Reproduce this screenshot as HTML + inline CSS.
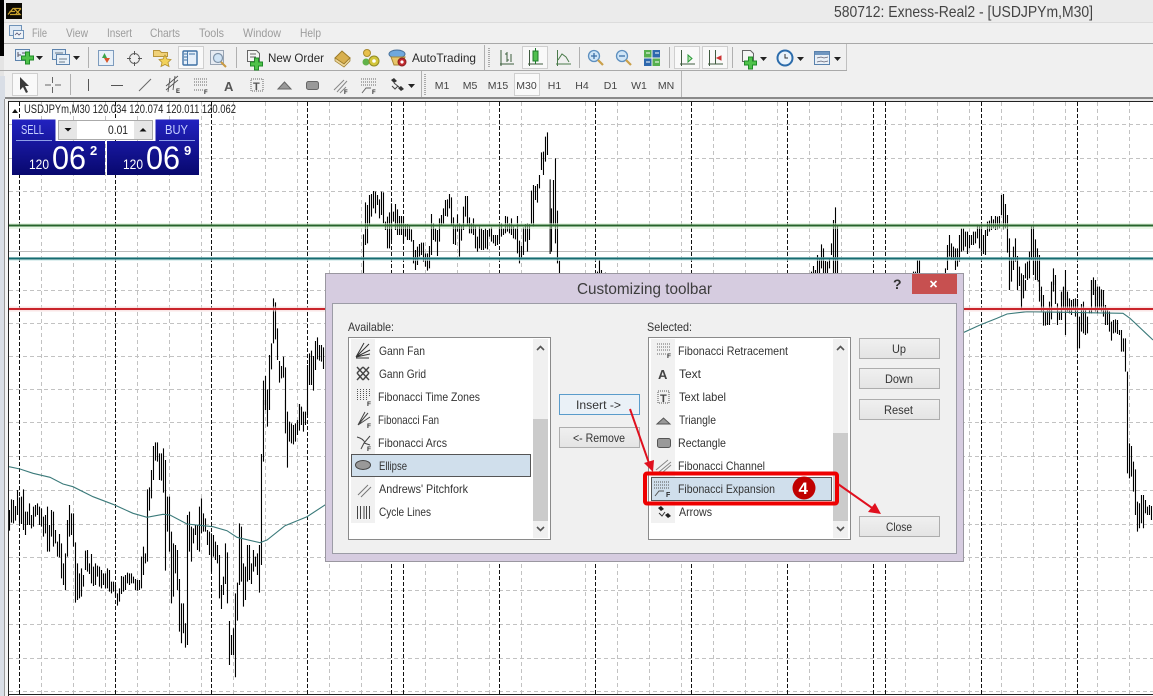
<!DOCTYPE html>
<html><head><meta charset="utf-8"><title>Customizing toolbar</title>
<style>
html,body{margin:0;padding:0;background:#fff;width:1153px;height:696px;overflow:hidden}
svg{display:block}
text{font-family:"Liberation Sans",sans-serif;font-size:11.5px;fill:#2a2a2a}
.m{fill:#9c9c9c;font-size:12px}
.tf{font-size:10.5px;fill:#444;text-anchor:middle}
.l{font-size:12px;fill:#333}
.w{fill:#fff}
</style></head><body>
<svg width="1153" height="696" viewBox="0 0 1153 696" xmlns="http://www.w3.org/2000/svg">
<defs>
<linearGradient id="g2" x1="0" y1="0" x2="0" y2="1"><stop offset="0" stop-color="#2222c0"/><stop offset="1" stop-color="#08086e"/></linearGradient>
<linearGradient id="b" x1="0" y1="0" x2="0" y2="1"><stop offset="0" stop-color="#f0f0f0"/><stop offset="1" stop-color="#e4e4e4"/></linearGradient>
</defs>

<!-- window chrome -->
<rect width="1153" height="696" fill="#fff"/>
<rect width="1153" height="98" fill="#f0f0f0"/>
<rect width="1153" height="22" fill="#ebebeb"/>
<rect y="22" width="1153" height="1" fill="#dcdcdc"/>
<rect y="43" width="1153" height="1" fill="#a8a8a8"/>
<rect y="97" width="1153" height="2" fill="#8a8a8a"/>
<rect y="99" width="1153" height="2" fill="#e8e8e8"/>
<rect x="0" y="0" width="4" height="56" fill="#000"/>
<rect x="0" y="56" width="4" height="20" fill="#e4e4e4"/>
<rect x="0" y="76" width="5" height="620" fill="#d9dee6"/>
<rect x="4" y="99" width="1" height="597" fill="#9a9a9a"/>
<rect x="5" y="99" width="3" height="597" fill="#f4f4f4"/>
<!-- logo -->
<rect x="6" y="3" width="16" height="16" fill="#0c0a04"/>
<path d="M8 14.500L13 8.500H21M9.500 11.500H15M10 14.500H20L14 8.500M16 14L21 8.500" fill="none" stroke="#c9a22e" stroke-width="1.300"/>
<text x="834" y="17" style="font-size:16px;fill:#444" textLength="259" lengthAdjust="spacingAndGlyphs">580712: Exness-Real2 - [USDJPYm,M30]</text>

<!-- menu -->
<rect x="9.500" y="25.500" width="12" height="10" fill="#dfe9f4" stroke="#6f92b8"/>
<rect x="13.500" y="30.500" width="10" height="8" fill="#eef3f8" stroke="#6f92b8"/>
<path d="M15 35l2-2 2 2 2-2" fill="none" stroke="#557" stroke-width=".8"/>
<text class="m" x="32" y="37" textLength="15" lengthAdjust="spacingAndGlyphs">File</text>
<text class="m" x="66" y="37" textLength="22" lengthAdjust="spacingAndGlyphs">View</text>
<text class="m" x="107" y="37" textLength="25" lengthAdjust="spacingAndGlyphs">Insert</text>
<text class="m" x="150" y="37" textLength="30" lengthAdjust="spacingAndGlyphs">Charts</text>
<text class="m" x="199" y="37" textLength="25" lengthAdjust="spacingAndGlyphs">Tools</text>
<text class="m" x="243" y="37" textLength="38" lengthAdjust="spacingAndGlyphs">Window</text>
<text class="m" x="300" y="37" textLength="21" lengthAdjust="spacingAndGlyphs">Help</text>

<!-- toolbar frames -->
<path d="M846.500 44V70" fill="none" stroke="#c0c0c0"/>
<rect y="70" width="847" height="1" fill="#a9a9a9"/>
<rect x="681" y="71" width="1" height="26" fill="#b5b5b5"/>
<path d="M88.500 47v21M236.500 47v21M484.500 45v25M579.500 47v21M669.500 47v21M732.500 47v21M70.500 74v21M421.500 71v26" stroke="#b0b0b0" fill="none"/>
<path d="M489 48v20M425 74v21" stroke="#aaa" stroke-width="2" stroke-dasharray="1 1" fill="none"/>
<!-- pressed boxes -->
<g fill="#f9f9f9" stroke="#cfcfcf">
<rect x="178.500" y="46.500" width="25" height="22"/><rect x="522.500" y="46.500" width="25" height="22"/>
<rect x="674.500" y="46.500" width="25" height="22"/><rect x="702.500" y="46.500" width="25" height="22"/>
<rect x="12.500" y="73.500" width="25" height="22"/><rect x="514.500" y="73.500" width="25" height="22"/>
</g>

<!-- row 1 icons -->
<rect x="15.500" y="49.500" width="14" height="11" fill="#e2ecf7" stroke="#5d83ad"/>
<path d="M18 52v5M18 55h3M22 53h4" stroke="#556" fill="none"/>
<path d="M25.500 52h4v4h4v4h-4v4h-4v-4h-4v-4h4z" fill="#4fc24a" stroke="#1f8a28"/>
<path d="M36 56h7l-3.500 4z" fill="#222"/>
<rect x="52.500" y="49.500" width="13" height="10" fill="#dbe7f3" stroke="#5d83ad"/>
<rect x="56.500" y="54.500" width="13" height="10" fill="#e8f0f8" stroke="#5d83ad"/>
<path d="M55 53h8M59 59h8M59 62h6" stroke="#456" fill="none" stroke-width=".8"/>
<path d="M73 56h7l-3.500 4z" fill="#222"/>
<rect x="98.500" y="50.500" width="15" height="15" fill="#e8f0f8" stroke="#7d9bbd"/>
<path d="M102 58l2.500-5 2.500 5z" fill="#3aa44a"/><path d="M104 58l3 5 3-5z" fill="#d8562a"/>
<circle cx="134.500" cy="58.500" r="5" fill="none" stroke="#666"/>
<path d="M134.500 51v4M134.500 62v4M127 58.500h4M138 58.500h4" stroke="#555" fill="none"/>
<path d="M153.500 50.500h6l2 2h6v4h-14z" fill="#f0d178" stroke="#b9953a"/>
<path d="M165 55l2 4 4 .5-3 3 1 4-4-2-4 2 1-4-3-3 4-.5z" fill="#f2d25a" stroke="#b18f2e" stroke-width=".8"/>
<rect x="183" y="51" width="14" height="14" rx="1" fill="#e6eff9" stroke="#3e70a4" stroke-width="1.400"/>
<path d="M187.500 51v14M184 54h3M184 57h3M184 60h3M189 54h6" stroke="#3e70a4" fill="none" stroke-width=".9"/>
<rect x="210.500" y="50.500" width="13" height="14" fill="#e6ebf2" stroke="#97a3b2"/>
<circle cx="218" cy="58" r="4.500" fill="#cfe3f5" stroke="#7f93a8" stroke-width="1.200"/>
<path d="M221 62l5 5" stroke="#c99a43" stroke-width="2"/>
<path d="M247.500 50.500h9l3 3v8h-12z" fill="#f5f5f5" stroke="#666"/>
<path d="M250 54h6M250 57h6" stroke="#666" fill="none"/>
<path d="M254.500 58h4v4h4v4h-4v4h-4v-4h-4v-4h4z" fill="#4fc24a" stroke="#1f8a28"/>
<text x="268" y="62" style="font-size:12px" textLength="56" lengthAdjust="spacingAndGlyphs">New Order</text>
<path d="M335 58l7-7 8 7-6 6z" fill="#d8b050" stroke="#9b7a26"/><path d="M335 58v3l9 6 6-6v-3l-6 6z" fill="#ecd69a" stroke="#9b7a26" stroke-width=".7"/>
<circle cx="367" cy="53" r="3.500" fill="#e8c04c" stroke="#a88a2e"/><circle cx="366" cy="62" r="3.500" fill="#61b24a"/>
<circle cx="374" cy="61" r="5" fill="#d2c53a" stroke="#8f8a26"/><circle cx="374" cy="61" r="1.800" fill="#fff"/>
<ellipse cx="397" cy="54" rx="8" ry="4" fill="#6fa8dc" stroke="#47709a"/>
<path d="M391 57l3 8h8l3-8z" fill="#e8c668" stroke="#a58734"/>
<circle cx="402" cy="62" r="4" fill="#c0272d" stroke="#822"/><circle cx="402" cy="62" r="1.600" fill="#fff"/>
<text x="412" y="62" style="font-size:12px" textLength="64" lengthAdjust="spacingAndGlyphs">AutoTrading</text>

<!-- chart type -->
<g fill="none" stroke="#3f5a3f">
<path d="M501 50v16M500 64h14M507 52v10M505 54h2M507 60h2M511 54v8" stroke="#3b5e3b"/>
<path d="M529.500 50v16M528 64h15"/>
<rect x="533" y="51" width="5" height="10" fill="#4fbf4f" stroke="#1e7a2a"/><path d="M535.500 48v3M535.500 61v3" stroke="#1e7a2a"/>
<path d="M557.500 50v16M556 64h15M558 60l4-6 4 3 3 5" stroke="#4a7a4a"/>
<path d="M681.500 50v16M680 64h15"/><path d="M688 55v7l4-3.500z" fill="#b8e8b0" stroke="#2a9a3a"/>
<path d="M709.500 50v16M708 64h15M715.500 50v14"/><path d="M717 58l4-2v4z" fill="#c33" stroke="#c33"/>
</g>
<g fill="none">
<circle cx="594" cy="56" r="5.500" fill="#cfe5f7" stroke="#5d8fbf" stroke-width="1.300"/><path d="M591 56h6M594 53v6" stroke="#3a6ea5" stroke-width="1.300"/><path d="M598 60l5 5" stroke="#caa04a" stroke-width="2.200"/>
<circle cx="622" cy="56" r="5.500" fill="#cfe5f7" stroke="#5d8fbf" stroke-width="1.300"/><path d="M619 56h6" stroke="#3a6ea5" stroke-width="1.300"/><path d="M626 60l5 5" stroke="#caa04a" stroke-width="2.200"/>
</g>
<rect x="644" y="50" width="7.500" height="7.500" fill="#57b04f"/><rect x="652.500" y="50" width="7.500" height="7.500" fill="#2e68ad"/>
<rect x="644" y="58.500" width="7.500" height="7.500" fill="#2e68ad"/><rect x="652.500" y="58.500" width="7.500" height="7.500" fill="#57b04f"/>
<path d="M646 53h4M655 53h4M646 62h4M655 62h4" stroke="#fff"/>
<path d="M742.500 50.500h8l3 3v8h-11z" fill="#f5f5f5" stroke="#666"/>
<path d="M748.500 57h4v4h4v4h-4v4h-4v-4h-4v-4h4z" fill="#4fc24a" stroke="#1f8a28"/>
<path d="M760 57h7l-3.500 4z" fill="#222"/>
<circle cx="785" cy="58" r="7.500" fill="#eaf3fb" stroke="#2c6cab" stroke-width="2"/><path d="M785 54v4h3" stroke="#333" fill="none"/>
<path d="M797 57h7l-3.500 4z" fill="#222"/>
<rect x="814.500" y="51.500" width="15" height="13" fill="#e9f0f7" stroke="#5a82ad"/><rect x="815" y="52" width="14" height="3" fill="#6f96c0"/>
<path d="M817 58l4-1 3 1 4-1M817 62l4-1 3 1 4-1" stroke="#667" stroke-width=".8" fill="none"/>
<path d="M834 57h7l-3.500 4z" fill="#222"/>

<!-- row 2 icons -->
<path d="M20 77v13l3-3 3 6 2-1-3-6h4z" fill="#3a3a3a"/>
<path d="M52.500 77v6M52.500 87v6M45 85h6M55 85h6" stroke="#666" fill="none"/>
<path d="M88.500 79v12" stroke="#555"/><path d="M111 85.500h12" stroke="#555"/><path d="M139 91l12-12" stroke="#666"/>
<g fill="none" stroke="#555" stroke-width=".9">
<path d="M166 90l12-10M166 86l12-10M168 92l2-14M173 90l2-14"/>
</g>
<text x="176" y="93" style="font-size:6px;font-weight:bold">E</text>
<path d="M194 79h13M194 82h13M194 85h13M194 90h9" stroke="#666" stroke-dasharray="1 1" fill="none"/>
<text x="204" y="94" style="font-size:6px;font-weight:bold">F</text>
<text x="224" y="91" style="font-size:13px;fill:#555;font-weight:bold">A</text>
<rect x="251" y="79" width="12" height="12" fill="none" stroke="#666" stroke-dasharray="1 1"/>
<text x="253" y="90" style="font-size:11px;font-weight:bold;fill:#555">T</text>
<path d="M278 89l6.500-7 6.500 7z" fill="#999" stroke="#666"/>
<rect x="306.500" y="81.500" width="12" height="8" rx="2" fill="#999" stroke="#666"/>
<path d="M334 90l10-10M337 92l10-11M340 93l6-6" stroke="#888" fill="none"/>
<text x="344" y="94" style="font-size:6px;font-weight:bold">F</text>
<path d="M361 79h15M361 82h15M361 85h15" stroke="#666" stroke-dasharray="1 1" fill="none"/><path d="M362 93l4-5 5 0" stroke="#666" fill="none"/>
<text x="372" y="94" style="font-size:6px;font-weight:bold">F</text>
<path d="M391 80l3-2 3 3-3 2zM398 88l3-2 3 3-3 2z" fill="#333"/><path d="M394 83l5 4M392 86l3 3 3-3" stroke="#444" fill="none"/>
<path d="M408 84h7l-3.500 4z" fill="#222"/>

<!-- timeframes -->
<text class="tf" x="442" y="89">M1</text><text class="tf" x="470" y="89">M5</text>
<text class="tf" x="498" y="89">M15</text><text class="tf" x="526.500" y="89">M30</text>
<text class="tf" x="554.500" y="89">H1</text><text class="tf" x="582" y="89">H4</text>
<text class="tf" x="610.500" y="89">D1</text><text class="tf" x="639" y="89">W1</text>
<text class="tf" x="666" y="89">MN</text>

<!-- chart frame -->
<path d="M8.500 696V101.500H1153" fill="none" stroke="#222"/>
<rect x="9" y="694" width="1144" height="1" fill="#222"/>

<!-- grid -->
<path fill="none" stroke="#c2c2c2" stroke-dasharray="4 3" d="M41.500 102V694M73.500 102V694M105.500 102V694M137.500 102V694M169.500 102V694M201.500 102V694M233.500 102V694M265.500 102V694M297.500 102V694M329.500 102V694M361.500 102V694M425.500 102V694M457.500 102V694M489.500 102V694M521.500 102V694M585.500 102V694M617.500 102V694M649.500 102V694M681.500 102V694M713.500 102V694M745.500 102V694M777.500 102V694M809.500 102V694M841.500 102V694M905.500 102V694M937.500 102V694M969.500 102V694M1001.500 102V694M1033.500 102V694M1065.500 102V694M1097.500 102V694M1129.500 102V694"/>
<path fill="none" stroke="#c2c2c2" stroke-dasharray="4 3" d="M9 124.500H1153M9 158.500H1153M9 191.500H1153M9 225.500H1153M9 258.500H1153M9 290.500H1153M9 323.500H1153M9 356.500H1153M9 389.500H1153M9 422.500H1153M9 456.500H1153M9 490.500H1153M9 524.500H1153M9 557.500H1153M9 590.500H1153M9 624.500H1153M9 658.500H1153M9 691.500H1153"/>
<path fill="none" stroke="#111" stroke-dasharray="4 2" d="M19.500 102V694M115.500 102V694M211.500 102V694M307.500 102V694M391.500 102V694M403.500 102V694M499.500 102V694M595.500 102V694M691.500 102V694M787.500 102V694M873.500 102V694M885.500 102V694M981.500 102V694M1077.500 102V694"/>
<rect x="9" y="251" width="1144" height="1" fill="#bcbcbc"/>

<!-- bars -->
<g fill="none" stroke="#000" stroke-width="3.300">
<path transform="translate(.17 400) scale(.3333 .3333)" d="M28 330V392M34 298V368M40 300V370M46 318V362M52 270V345M58 292V370M64 290V372M70 268V390M76 335V405M82 335V375M88 310V375M94 345V385M100 320V380M106 315V350M112 310V345M118 320V375M124 325V380M130 350V410M136 345V400M142 320V455M148 375V455M154 330V410M160 335V440M166 390V430M172 425V470M178 402V472M184 430V535M190 490V555M196 460V570M202 360V470M208 315V410M214 340V405M220 340V440M226 427V608M232 490V600M238 520V595M244 505V590M250 525V560M256 452V510M262 450V515M268 490V522M274 462V550M280 500V558M286 490V555M292 497V530M298 500V560M304 510V565M310 520V555M316 520V565M322 505V565M328 510V575M334 545V580M340 545V575M346 555V590M352 580V617M358 565V605M364 528V582M370 530V575M376 525V570M382 518V550M388 520V555M394 520V550M400 530V550M406 537V570M412 540V572M418 540V570M424 470V565M430 440V525M436 460V490M442 268V485M448 262V332M454 210V295M460 138V240M466 127V182M472 127V185M478 160V240M484 160V242M490 145V278M496 180V512M502 290V395M508 290V455M514 395V610M520 430V590M526 435V520M532 450V570M538 537V695M544 610V730M550 610V700M556 670V743M562 345V735M568 335V455M574 380V485M580 385V430M586 375V405M592 375V450M598 320V455M604 295V400M610 340V395M616 355V395M622 390V435M628 395V465M634 400V515M640 405V470M646 425V480M652 435V490M658 465V595M664 555V627M670 530V585M676 430V552M682 457V610M688 663V795M694 705V765M700 685V765M706 580V832M712 548V662M718 370V555M724 380V545M730 490V620M736 500V600M742 435V545M748 435V540M754 490V552M760 450V515M766 470V500M772 460V525M778 435V578M784 162V495M790 0V185M796 0V15M802 0V80M856 0V100M862 35V203M868 65V125M874 70V130M880 75V133M886 70V125M892 60V105M898 12V92M904 20V75M910 35V95M916 35V75M922 0V45"/>
<path transform="translate(250.170 290) scale(.3333 .3333)" d="M40 272V360M46 258V360M52 298V360M58 195V360M64 160V238M70 25V160M76 37V148M82 115V210M88 213V278M94 228V265M100 200V263M106 232V360M148 342V360M154 352V360M172 225V360M178 190V285M184 182V285M190 198V302M196 153V240M202 142V208M208 165V212M214 165V215M220 172V237"/>
<path transform="translate(340.170 120) scale(.3333 .3333)" d="M70 343V460M76 247V375M82 255V370M88 225V315M94 222V290M100 213V265M106 215V280M112 225V255M118 238V295M124 215V285M130 217V310M136 305V330M142 290V385M148 277V385M154 250V360M160 275V305M166 252V330M172 268V345M178 288V345M184 288V345M190 290V370M196 312V350M202 312V360M208 318V360M214 328V365M220 360V430M226 390V450M232 380V435M238 372V410M244 368V405M250 368V425M256 400V440M262 400V452M268 378V445M274 282V405M280 310V360M286 325V365M292 330V408M298 295V365M304 285V318M310 265V312M316 240V288M322 238V290M328 222V265M334 232V315M340 292V372M346 315V375M352 283V335M358 310V410M364 315V362M370 260V330M376 228V290M382 228V315M388 292V340M394 310V340M400 295V345M406 320V385M412 350V395M418 320V385M424 325V390M430 330V390M436 325V385M442 330V388M448 325V350M454 322V365M460 345V370M466 345V378M472 345V375M478 320V360M484 310V350M490 325V345M496 288V340M502 290V335M508 310V340M514 295V345M520 320V355M526 325V358M532 288V400M538 362V430M544 378V415M550 322V405M556 312V365M562 310V395M568 312V360M574 212V312M580 195V320M586 198V240M592 192V248M598 165V205M604 97V150M610 95V165M616 50V125M622 37V105M630 178V402M634 265V395M640 180V320M646 115V370M652 272V430M658 422V460M772 455V460M778 420V460M784 450V460M796 458V460"/>
<path transform="translate(800.170 180) scale(.3333 .3333)" d="M34 275V280M40 258V280M46 270V280M52 225V280M58 235V280M64 193V265M70 205V280M76 243V280M82 245V280M88 235V265M94 190V225M100 120V280M106 82V280M112 135V280M340 275V280M346 275V280M352 240V280M358 240V280M436 265V280M442 195V270M448 165V230M454 190V240M460 200V240M466 205V270M472 205V260M478 165V245M484 145V215M490 145V212M496 155V200M502 155V222M508 165V205M514 165V195M520 155V195M526 155V190M532 133V175M538 140V205M544 135V215M550 165V222M556 150V225M562 125V168M568 122V155M574 108V150M580 118V145M586 108V150M592 110V148M598 108V145M604 45V105M610 42V148M616 72V145M622 105V218M628 175V330M634 235V300M640 200V270M646 175V245M652 228V330M658 260V300M664 280V360M670 285V335M676 250V295M682 245V300M688 215V295M694 140V240M700 140V285M706 178V300M712 205V300M718 225V320M724 320V360M754 330V360M760 265V335M766 285V315M784 340V360M790 322V360M796 270V360M802 335V360M820 357V360M826 357V360M832 357V360M874 300V360M880 292V345M886 325V360M892 320V360M898 320V355M904 328V360M910 333V360"/>
<path transform="translate(960.170 280) scale(.3333 .3333)" d="M148 0V30M154 0V5M178 0V18M184 0V85M190 0V55M196 0V32M234 0V5M238 0V65M244 45V95M250 45V137M256 95V137M262 90V135M268 65V135M274 5V118M280 0V15M286 0V72M292 70V135M298 95V120M304 35V120M310 20V90M316 0V165M322 55V95M328 55V100M334 60V105M340 58V90M346 55V110M352 58V205M358 110V205M364 72V155M370 65V160M376 90V165M382 110V160M388 90V100M394 0V100M400 0V45M406 0V95M412 55V100M418 20V90M424 30V95M430 30V110M436 75V135M442 90V135M448 95V155M454 125V182M460 120V160M466 118V158M472 120V162M478 150V165M484 150V215M490 175V215M496 175V275M502 275V580M508 490V595M514 498V590M520 545V635M526 568V705M532 665V755M538 670V745M544 645V730M550 645V745M556 660V700M562 680V705M568 675V705M574 678V720"/>
</g>

<!-- moving average -->
<path fill="none" stroke="#3b7a7a" stroke-width="1.100" d="M9 466.700L20 469L33 473.300L50 477.300L63 484L73 486.700L93 496.700L113 504.300L133 513.300L147 517.300L163 514.300L170 515L187 524L213 526.700L227 530.700L237 537.300L260 542.700L267 540L285 525.700L307 516.700L326 504.300L400 440L700 340L964 332.300L980 325L997 318.300L1007 314L1027 311.700L1123 313.300L1130 318.300L1153 340"/>

<!-- horizontal lines -->
<rect x="9" y="223" width="1144" height="6" fill="#d9f0d3" opacity=".55"/>
<rect x="9" y="224.500" width="1144" height="2" fill="#27642b"/>
<rect x="9" y="257" width="1144" height="4" fill="#c9e6e6" opacity=".6"/>
<rect x="9" y="257.500" width="1144" height="2" fill="#166b70"/>
<rect x="9" y="306.500" width="1144" height="5" fill="#f6d5d5" opacity=".6"/>
<rect x="9" y="308" width="1144" height="2" fill="#c9242b"/>

<!-- chart header + trade panel -->
<path d="M12 113l3-4 3 4z" fill="#111"/>
<text x="24" y="113" style="font-size:11.5px;fill:#222" textLength="212" lengthAdjust="spacingAndGlyphs">USDJPYm,M30  120.034 120.074 120.011 120.062</text>
<path d="M12 119.500H55.500V141H105V175H12z" fill="url(#g2)"/>
<path d="M107 141H155.500V119.500H199V175H107z" fill="url(#g2)"/>
<rect x="16" y="140" width="36" height="1" fill="#8fa0e8"/><rect x="159" y="140" width="36" height="1" fill="#8fa0e8"/>
<text x="21" y="134" style="font-size:12.500px;fill:#c6d0ff" textLength="23" lengthAdjust="spacingAndGlyphs">SELL</text>
<text x="165" y="134" style="font-size:12.500px;fill:#c6d0ff" textLength="23" lengthAdjust="spacingAndGlyphs">BUY</text>
<rect x="58.500" y="120.500" width="94" height="19" fill="#fff" stroke="#aaa"/>
<rect x="59" y="121" width="18" height="18" fill="#e6e6e6"/><rect x="134" y="121" width="18" height="18" fill="#e6e6e6"/>
<path d="M64.500 128h7l-3.500 3.500z" fill="#111"/><path d="M139.500 131.500h7l-3.500-3.500z" fill="#111"/>
<text x="108" y="134" style="font-size:12px;fill:#222" textLength="20" lengthAdjust="spacingAndGlyphs">0.01</text>
<text class="w" x="29" y="169" style="font-size:14px" textLength="20" lengthAdjust="spacingAndGlyphs">120</text>
<text class="w" x="52" y="169" style="font-size:32px" textLength="34" lengthAdjust="spacingAndGlyphs">06</text>
<text class="w" x="90" y="155" style="font-size:13px;font-weight:bold">2</text>
<text class="w" x="123" y="169" style="font-size:14px" textLength="20" lengthAdjust="spacingAndGlyphs">120</text>
<text class="w" x="146" y="169" style="font-size:32px" textLength="34" lengthAdjust="spacingAndGlyphs">06</text>
<text class="w" x="184" y="155" style="font-size:13px;font-weight:bold">9</text>

<!-- dialog -->
<rect x="325.500" y="273.500" width="638" height="288" fill="#d6cce0" stroke="#9a97a0"/>
<rect x="332.500" y="303.500" width="624" height="250" fill="#f0f0f0" stroke="#9c9ca6"/>
<text x="577" y="294" style="font-size:16px;fill:#3c3c3c" textLength="135" lengthAdjust="spacingAndGlyphs">Customizing toolbar</text>
<text x="893" y="289" style="font-size:14px;font-weight:bold;fill:#333">?</text>
<rect x="912" y="274" width="45" height="20" fill="#c75050"/>
<path d="M930.500 281l6 6M936.500 281l-6 6" stroke="#fff" stroke-width="1.600" fill="none"/>

<text class="l" x="348" y="331" textLength="46" lengthAdjust="spacingAndGlyphs">Available:</text>
<text class="l" x="647" y="331" textLength="45" lengthAdjust="spacingAndGlyphs">Selected:</text>

<!-- available list -->
<rect x="348.500" y="337.500" width="202" height="202" fill="#fff" stroke="#8a8a8a"/>
<rect x="351" y="339" width="24" height="184" fill="#f1f1f1"/>
<rect x="533" y="339" width="15" height="199" fill="#f0f0f0"/>
<rect x="533" y="419" width="15" height="102" fill="#cbcbcb"/>
<path d="M537 350l3.500-3.500 3.500 3.500M537 527l3.500 3.500 3.500-3.500" stroke="#555" stroke-width="1.600" fill="none"/>
<rect x="351.500" y="454.500" width="179" height="22" fill="#d0dfec" stroke="#555"/>
<text class="l" x="379" y="355" textLength="46" lengthAdjust="spacingAndGlyphs">Gann Fan</text>
<text class="l" x="379" y="378" textLength="47" lengthAdjust="spacingAndGlyphs">Gann Grid</text>
<text class="l" x="378" y="401" textLength="102" lengthAdjust="spacingAndGlyphs">Fibonacci Time Zones</text>
<text class="l" x="378" y="424" textLength="61" lengthAdjust="spacingAndGlyphs">Fibonacci Fan</text>
<text class="l" x="378" y="447" textLength="69" lengthAdjust="spacingAndGlyphs">Fibonacci Arcs</text>
<text class="l" x="379" y="470" textLength="28" lengthAdjust="spacingAndGlyphs">Ellipse</text>
<text class="l" x="379" y="493" textLength="89" lengthAdjust="spacingAndGlyphs">Andrews' Pitchfork</text>
<text class="l" x="379" y="516" textLength="52" lengthAdjust="spacingAndGlyphs">Cycle Lines</text>
<path d="M356 357l13-13M356 357l14-7M356 357l14-3M356 357l8-14M356 358h13" stroke="#333" fill="none"/>
<path d="M357 367l12 13M363 367l6 6M357 373l6 7M369 367l-12 13M363 367l-6 6M369 373l-6 7" stroke="#444" stroke-width="1.400" fill="none"/>
<path d="M357.500 389v11M360.500 389v11M363.500 389v11M366.500 389v11M369.500 389v8" stroke="#555" stroke-dasharray="1 1" fill="none"/>
<text x="367" y="406" style="font-size:6.500px;font-weight:bold">F</text>
<path d="M358 425l10-12M358 425l12-8M358 425l7-13" stroke="#444" fill="none"/><text x="367" y="428" style="font-size:6.500px;font-weight:bold">F</text>
<path d="M357 437c4 1 7 3 8 6M370 436l-6 7-3 6M364 443l6 2" stroke="#444" fill="none"/><text x="367" y="451" style="font-size:6.500px;font-weight:bold">F</text>
<ellipse cx="363" cy="465" rx="7.500" ry="4.500" fill="#999" stroke="#444"/>
<path d="M358 495l10-10M361 497l10-10M364 494l5-5" stroke="#777" fill="none"/>
<path d="M357.500 506v13M360.500 506v13M366.500 506v13M369.500 506v13M364 506v13" stroke="#444" fill="none"/>

<!-- selected list -->
<rect x="648.500" y="337.500" width="202" height="202" fill="#fff" stroke="#8a8a8a"/>
<rect x="651" y="339" width="24" height="184" fill="#f1f1f1"/>
<rect x="833" y="339" width="15" height="199" fill="#f0f0f0"/>
<rect x="833" y="433" width="15" height="88" fill="#cbcbcb"/>
<path d="M837 350l3.500-3.500 3.500 3.500M837 527l3.500 3.500 3.500-3.500" stroke="#555" stroke-width="1.600" fill="none"/>
<text class="l" x="678" y="355" textLength="110" lengthAdjust="spacingAndGlyphs">Fibonacci Retracement</text>
<text class="l" x="679" y="378" textLength="22" lengthAdjust="spacingAndGlyphs">Text</text>
<text class="l" x="679" y="401" textLength="47" lengthAdjust="spacingAndGlyphs">Text label</text>
<text class="l" x="679" y="424" textLength="37" lengthAdjust="spacingAndGlyphs">Triangle</text>
<text class="l" x="678" y="447" textLength="48" lengthAdjust="spacingAndGlyphs">Rectangle</text>
<text class="l" x="678" y="470" textLength="87" lengthAdjust="spacingAndGlyphs">Fibonacci Channel</text>
<text class="l" x="679" y="516" textLength="33" lengthAdjust="spacingAndGlyphs">Arrows</text>
<path d="M657 344h13M657 347h13M657 350h13M657 354h10" stroke="#666" stroke-dasharray="1 1" fill="none"/><text x="667" y="358" style="font-size:6.500px;font-weight:bold">F</text>
<text x="658" y="379" style="font-size:13px;font-weight:bold;fill:#444">A</text>
<rect x="658" y="391" width="11" height="12" fill="none" stroke="#555" stroke-dasharray="1 1"/><text x="660" y="402" style="font-size:11px;font-weight:bold;fill:#444">T</text>
<path d="M657 424l6.500-6 6.500 6z" fill="#999" stroke="#555"/>
<rect x="657.500" y="438.500" width="13" height="9" rx="2" fill="#999" stroke="#555"/>
<path d="M656 470l12-10M659 472l12-10M663 472l8-7" stroke="#888" fill="none"/>
<path d="M658 508l3-2 3 3-3 2zM665 515l3-2 3 3-3 2z" fill="#222"/><path d="M659 513l3 3 3-4" stroke="#333" fill="none"/>

<!-- buttons -->
<rect x="559.500" y="394.500" width="80" height="20" fill="#eaf1f7" stroke="#5a9ccb"/>
<rect x="559.500" y="427.500" width="80" height="20" fill="url(#b)" stroke="#adadad"/>
<rect x="859.500" y="338.500" width="80" height="20" fill="url(#b)" stroke="#adadad"/>
<rect x="859.500" y="368.500" width="80" height="20" fill="url(#b)" stroke="#adadad"/>
<rect x="859.500" y="399.500" width="80" height="20" fill="url(#b)" stroke="#adadad"/>
<rect x="859.500" y="516.500" width="80" height="20" fill="url(#b)" stroke="#adadad"/>
<text class="l" x="576" y="409" textLength="45" lengthAdjust="spacingAndGlyphs">Insert -&gt;</text>
<text class="l" x="573" y="442" textLength="52" lengthAdjust="spacingAndGlyphs">&lt;- Remove</text>
<text class="l" x="892" y="353" textLength="14" lengthAdjust="spacingAndGlyphs">Up</text>
<text class="l" x="885" y="383" textLength="28" lengthAdjust="spacingAndGlyphs">Down</text>
<text class="l" x="884" y="414" textLength="29" lengthAdjust="spacingAndGlyphs">Reset</text>
<text class="l" x="886" y="531" textLength="26" lengthAdjust="spacingAndGlyphs">Close</text>

<!-- highlight -->
<rect x="651.500" y="477.500" width="180" height="23" fill="#d0dfec" stroke="#555"/>
<path d="M654 482h15M654 485h15M654 488h15" stroke="#555" stroke-dasharray="1 1" fill="none"/><path d="M655 496l4-5 5 0" stroke="#555" fill="none"/>
<text x="666" y="497" style="font-size:7px;font-weight:bold">F</text>
<text class="l" x="678" y="493" textLength="97" lengthAdjust="spacingAndGlyphs">Fibonacci Expansion</text>
<rect x="645" y="473.500" width="192" height="30" rx="2" fill="none" stroke="#ee0000" stroke-width="4"/>
<circle cx="804" cy="488" r="11.500" fill="#c00000"/>
<text class="w" x="798.500" y="494" style="font-size:17px;font-weight:bold">4</text>
<path d="M630 409L650 466" stroke="#e0101e" stroke-width="2" fill="none"/>
<path d="M653 472L644 463L654 460z" fill="#e0101e"/>
<path d="M838 484L875 510" stroke="#e0101e" stroke-width="2" fill="none"/>
<path d="M881 514L868 512L875 503z" fill="#e0101e"/>
</svg>
</body></html>
